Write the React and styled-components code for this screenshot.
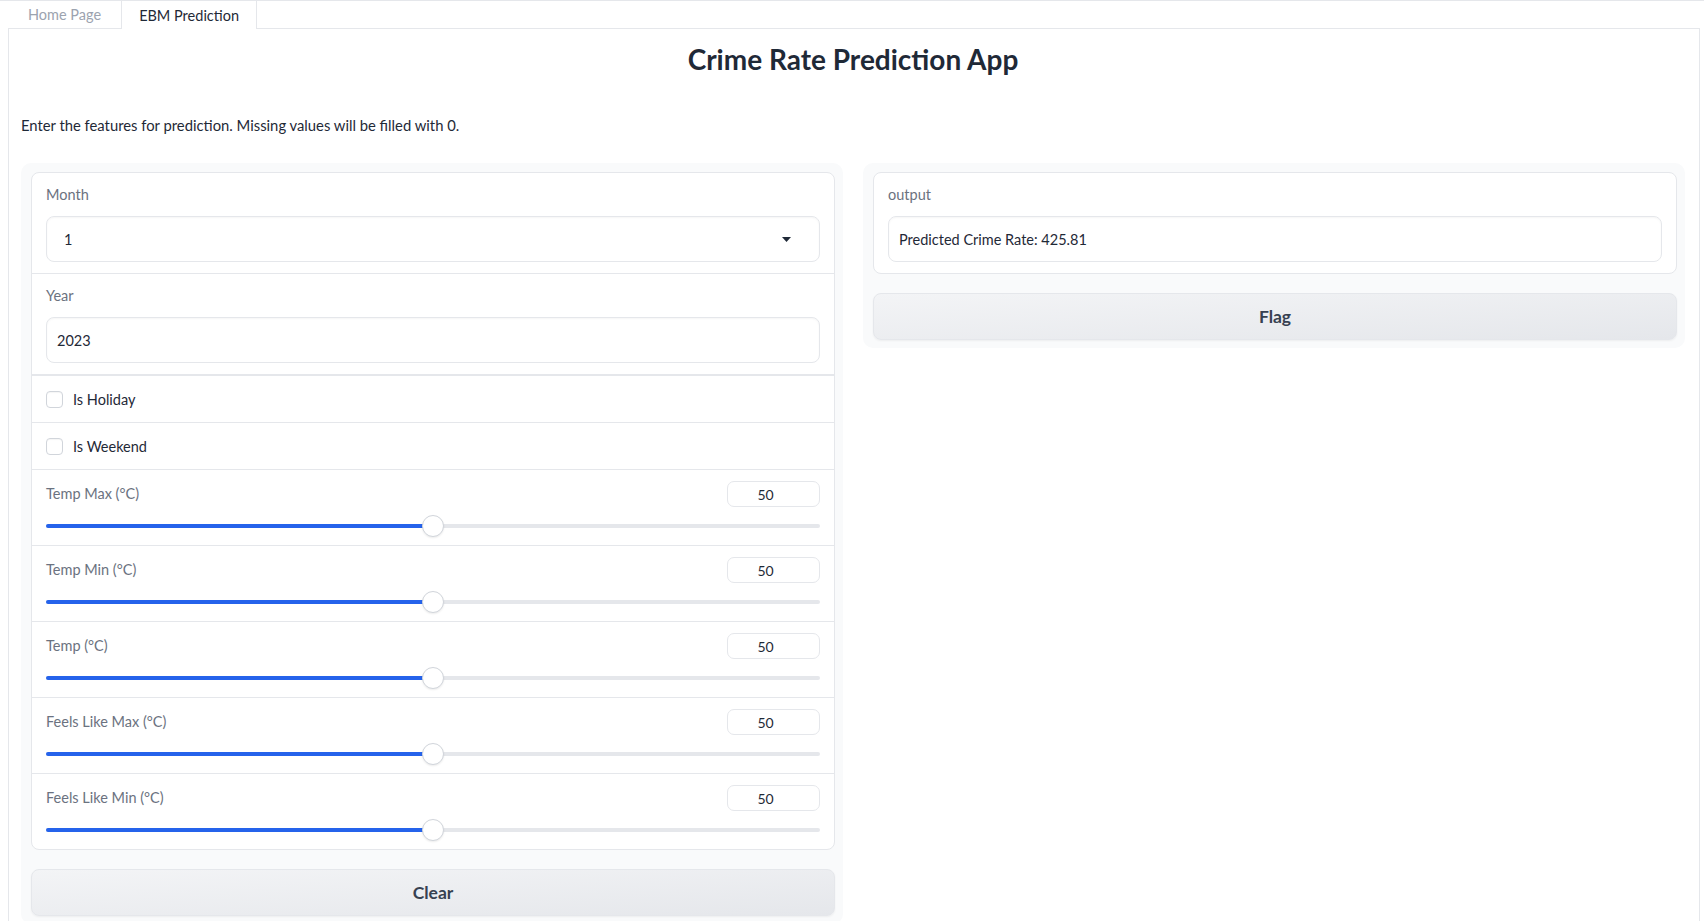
import React from "react";
import styled, { createGlobalStyle } from "styled-components";

const Global = createGlobalStyle`
  html, body { margin: 0; padding: 0; background: #ffffff; }
  body {
    font-family: "Lato", "Noto Sans", sans-serif;
    color: #1f2937;
    border-top: 1px solid #e5e7eb;
  }
  * { box-sizing: border-box; }
`;

const Page = styled.div`
  padding: 0 4px 0 8px;
`;

const TabNav = styled.div`
  display: flex;
  height: 28px;
  border-bottom: 1px solid #e5e7eb;
`;

const Tab = styled.div`
  display: flex;
  align-items: center;
  padding: 0 ${(p) => (p.$active ? "17px" : "19px")};
  font-size: 14.5px;
  color: ${(p) => (p.$active ? "#1f2937" : "#9ca3af")};
  background: #fff;
  border: 1px solid ${(p) => (p.$active ? "#e5e7eb" : "transparent")};
  border-top: none;
  border-bottom: none;
  margin-bottom: ${(p) => (p.$active ? "-1px" : "0")};
  height: ${(p) => (p.$active ? "28px" : "27px")};
`;

const TabBody = styled.div`
  border: 1px solid #e5e7eb;
  border-top: none;
  padding: 0 14px 20px 12px;
  min-height: 900px;
`;

const Title = styled.h1`
  margin: 0;
  padding-top: 10px;
  height: 60px;
  text-align: center;
  font-size: 28px;
  font-weight: 700;
  color: #1f2937;
  line-height: 40px;
`;

const Description = styled.p`
  margin: 26px 0 0;
  font-size: 14.8px;
  line-height: 20px;
  color: #1f2937;
`;

const Columns = styled.div`
  display: grid;
  grid-template-columns: 1fr 1fr;
  gap: 20px;
  margin-top: 28px;
  align-items: start;
`;

const Panel = styled.div`
  background: #f9fafb;
  border-radius: 10px;
  padding: 9px 8px 8px 10px;
  display: flex;
  flex-direction: column;
  gap: 19px;
`;

const FormBox = styled.div`
  background: #fff;
  border: 1px solid #e5e7eb;
  border-radius: 8px;
  overflow: hidden;
  display: flex;
  flex-direction: column;
`;

const Block = styled.div`
  padding: ${(p) => p.$pad || "12px 14px 11px"};
  border-top: ${(p) => (p.$first ? "none" : "1px solid #e5e7eb")};
  display: flex;
  flex-direction: column;
`;

const Label = styled.div`
  font-size: 14.5px;
  line-height: 20px;
  color: #6b7280;
  margin-bottom: ${(p) => (p.$noGap ? "0" : "11px")};
`;

const Field = styled.div`
  height: 46px;
  border: 1px solid #e5e7eb;
  border-radius: 8px;
  box-shadow: 0 1px 2px rgba(0, 0, 0, 0.04) inset;
  display: flex;
  align-items: center;
  padding: 0 ${(p) => (p.$select ? "28px" : "11px")} 0 ${(p) => (p.$select ? "17px" : "10px")};
  font-size: 14.5px;
  color: #1f2937;
  justify-content: space-between;
  background: #fff;
`;

const Arrow = styled.svg`
  width: 9px;
  height: 5px;
`;

const CheckRow = styled.label`
  display: flex;
  align-items: center;
  gap: 10px;
  height: ${(p) => (p.$thick ? "48px" : "47px")};
  padding: 0 14px;
  border-top: ${(p) => (p.$thick ? 2 : 1)}px solid #e5e7eb;
  font-size: 14.5px;
  color: #1f2937;
`;

const Box = styled.span`
  width: 17px;
  height: 17px;
  border: 1px solid #d1d5db;
  border-radius: 4px;
  background: #fff;
  box-shadow: 0 1px 1px rgba(0, 0, 0, 0.04) inset;
`;

const SliderHead = styled.div`
  display: flex;
  justify-content: space-between;
  align-items: center;
  height: 26px;
`;

const NumberBox = styled.div`
  width: 93px;
  height: 26px;
  border: 1px solid #e5e7eb;
  border-radius: 7px;
  display: flex;
  align-items: center;
  justify-content: center;
  padding-right: 16px;
  font-size: 14px;
  color: #1f2937;
`;

const Track = styled.div`
  position: relative;
  height: 22px;
  margin-top: 8px;
  display: flex;
  align-items: center;
`;

const Rail = styled.div`
  width: 100%;
  height: 4px;
  border-radius: 2px;
  background: #e5e7eb;
  overflow: hidden;
`;

const Fill = styled.div`
  height: 100%;
  background: #2563eb;
`;

const Thumb = styled.div`
  position: absolute;
  top: 0;
  width: 22px;
  height: 22px;
  margin-left: -11px;
  border-radius: 50%;
  background: #fff;
  border: 1px solid #d1d5db;
  box-shadow: 0 1px 2px rgba(0, 0, 0, 0.08);
`;

const Button = styled.button`
  height: 47px;
  width: 100%;
  border: 1px solid #e5e7eb;
  border-radius: 8px;
  background: linear-gradient(to bottom right, #f3f4f6, #e5e7eb);
  font-family: inherit;
  font-size: 17.5px;
  font-weight: 700;
  color: #374151;
  box-shadow: 0 1px 2px rgba(0, 0, 0, 0.05);
`;

function Slider({ label, value, min = 0, max = 100 }) {
  const pct = ((value - min) / (max - min)) * 100;
  return (
    <Block $pad="11px 14px 8px">
      <SliderHead>
        <Label $noGap>{label}</Label>
        <NumberBox>{value}</NumberBox>
      </SliderHead>
      <Track>
        <Rail>
          <Fill style={{ width: `${pct}%` }} />
        </Rail>
        <Thumb style={{ left: `${pct}%` }} />
      </Track>
    </Block>
  );
}

export default function App() {
  const sliders = [
    "Temp Max (°C)",
    "Temp Min (°C)",
    "Temp (°C)",
    "Feels Like Max (°C)",
    "Feels Like Min (°C)",
  ];
  return (
    <>
      <Global />
      <Page>
        <TabNav>
          <Tab>Home Page</Tab>
          <Tab $active>EBM Prediction</Tab>
        </TabNav>
        <TabBody>
          <Title>Crime Rate Prediction App</Title>
          <Description>
            Enter the features for prediction. Missing values will be filled with 0.
          </Description>
          <Columns>
            <Panel>
              <FormBox>
                <Block $first>
                  <Label>Month</Label>
                  <Field $select>
                    <span>1</span>
                    <Arrow viewBox="0 0 9 5">
                      <path d="M0 0 L9 0 L4.5 5 Z" fill="#1f2937" />
                    </Arrow>
                  </Field>
                </Block>
                <Block>
                  <Label>Year</Label>
                  <Field>2023</Field>
                </Block>
                <CheckRow $thick>
                  <Box />
                  Is Holiday
                </CheckRow>
                <CheckRow>
                  <Box />
                  Is Weekend
                </CheckRow>
                {sliders.map((s) => (
                  <Slider key={s} label={s} value={50} />
                ))}
              </FormBox>
              <Button>Clear</Button>
            </Panel>
            <Panel>
              <FormBox>
                <Block $first>
                  <Label>output</Label>
                  <Field>Predicted Crime Rate: 425.81</Field>
                </Block>
              </FormBox>
              <Button>Flag</Button>
            </Panel>
          </Columns>
        </TabBody>
      </Page>
    </>
  );
}
